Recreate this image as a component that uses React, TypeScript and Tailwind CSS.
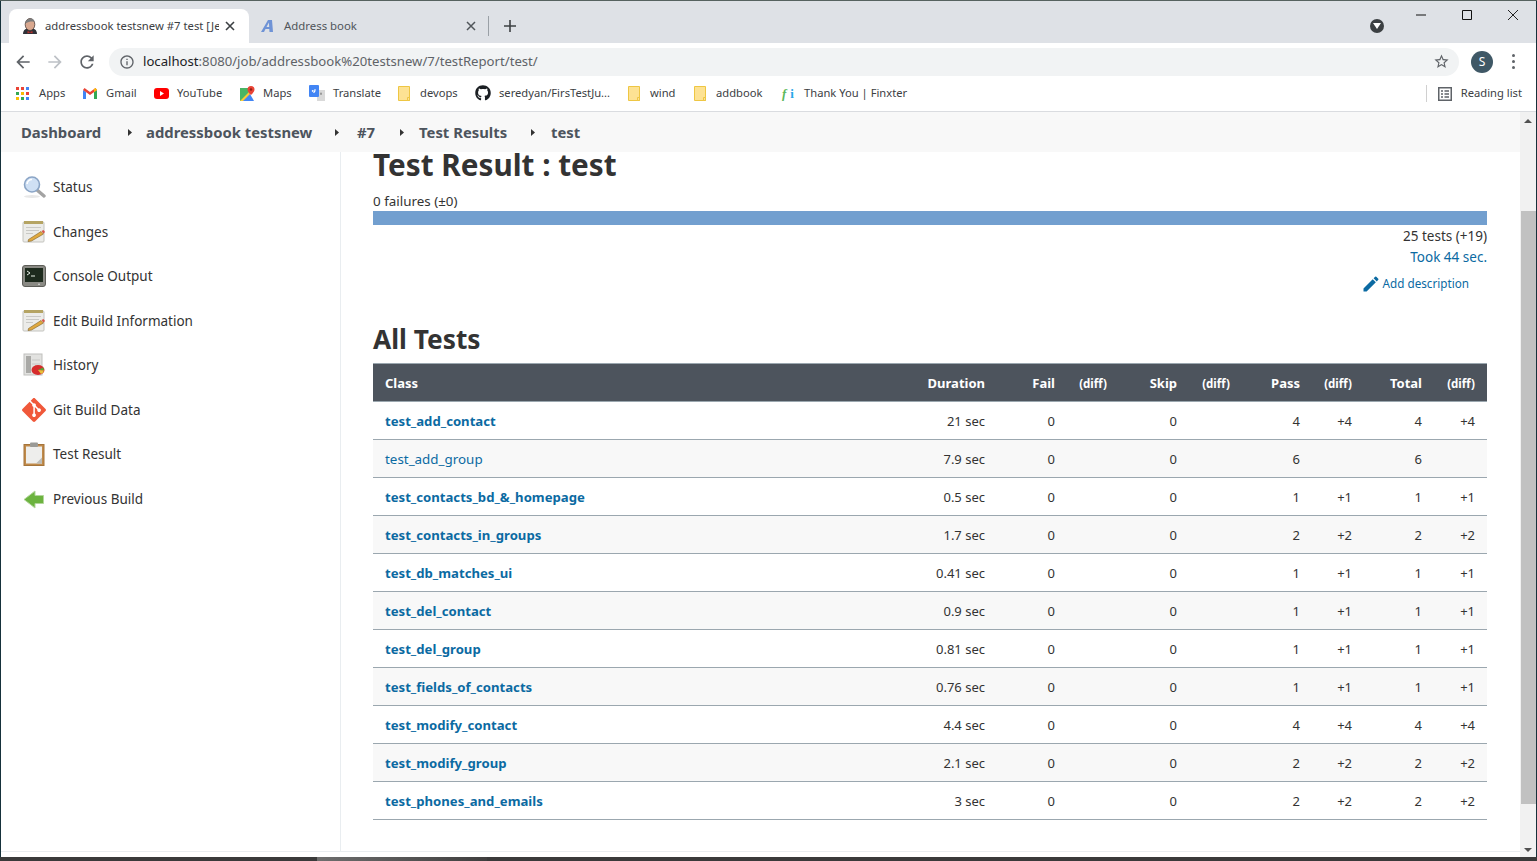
import React from "react";
import { SiGit } from "react-icons/si";
import { FaGithub } from "react-icons/fa";

const rows = [
  ["test_add_contact", "21 sec", "0", "0", "4", "+4", "4", "+4", true],
  ["test_add_group", "7.9 sec", "0", "0", "6", "", "6", "", false],
  ["test_contacts_bd_&_homepage", "0.5 sec", "0", "0", "1", "+1", "1", "+1", true],
  ["test_contacts_in_groups", "1.7 sec", "0", "0", "2", "+2", "2", "+2", true],
  ["test_db_matches_ui", "0.41 sec", "0", "0", "1", "+1", "1", "+1", true],
  ["test_del_contact", "0.9 sec", "0", "0", "1", "+1", "1", "+1", true],
  ["test_del_group", "0.81 sec", "0", "0", "1", "+1", "1", "+1", true],
  ["test_fields_of_contacts", "0.76 sec", "0", "0", "1", "+1", "1", "+1", true],
  ["test_modify_contact", "4.4 sec", "0", "0", "4", "+4", "4", "+4", true],
  ["test_modify_group", "2.1 sec", "0", "0", "2", "+2", "2", "+2", true],
  ["test_phones_and_emails", "3 sec", "0", "0", "2", "+2", "2", "+2", true],
] as const;

const Notepad = () => (
  <svg width="24" height="24" viewBox="0 0 24 24">
    <rect x="1" y="2" width="21" height="20" rx="1" fill="#ecece9" stroke="#c4c4bf" />
    <rect x="2" y="1" width="19" height="3" fill="#b5a463" />
    <path d="M4 7.500h15M4 10.500h13M4 13.500h7" stroke="#c9c9c5" strokeWidth="1" />
    <path d="M6.500 19.500l12.500-8 2.500 2.500-12 7-3.500 .5z" fill="#e0a93f" stroke="#7e5f26" strokeWidth=".6" />
    <path d="M19.500 11l2-1 1.500 2-1.500 1.500z" fill="#d9534a" />
  </svg>
);
const Magnifier = () => (
  <svg width="24" height="24" viewBox="0 0 24 24">
    <ellipse cx="10" cy="21.500" rx="8" ry="1.500" fill="#e8e8e8" />
    <path d="M15 15l7 6" stroke="#a3a3a3" strokeWidth="3.400" strokeLinecap="round" />
    <circle cx="10" cy="9.500" r="7.500" fill="#cfe0f4" stroke="#8ba5c6" strokeWidth="1.600" />
    <path d="M5 9a5 5 0 015-4.500" stroke="#fff" strokeWidth="1.600" fill="none" />
  </svg>
);
const Terminal = () => (
  <svg width="24" height="24" viewBox="0 0 24 24">
    <rect x="0.500" y="1.500" width="23" height="21" rx="2.500" fill="#8a8a84" stroke="#5d5d58" />
    <rect x="3" y="4" width="18" height="14" fill="#1d2a1d" />
    <path d="M5 7l3 2-3 2" stroke="#e8efe6" strokeWidth="1" fill="none" />
    <path d="M9 12h4" stroke="#e8efe6" strokeWidth="1" />
    <circle cx="17" cy="20.300" r=".7" fill="#fff" />
  </svg>
);
const History = () => (
  <svg width="24" height="24" viewBox="0 0 24 24">
    <rect x="2" y="1" width="18" height="21" fill="#e2e2e0" stroke="#c0c0bd" />
    <rect x="4" y="3" width="5" height="17" fill="#a9a9a6" />
    <path d="M10 7h8M10 11h8M10 15h8" stroke="#c8c8c6" />
    <ellipse cx="16" cy="17" rx="6.500" ry="5" fill="#d62c2c" />
    <path d="M16 17l5 -2.500a6 5 0 011 3z" fill="#57a63a" />
    <path d="M16 17l6 .5a6 5 0 01-3 3.600z" fill="#e6c23a" />
  </svg>
);
const Clipboard = () => (
  <svg width="24" height="24" viewBox="0 0 24 24">
    <rect x="2" y="2.500" width="20" height="21" fill="#c08a4a" stroke="#a5743a" />
    <rect x="4" y="4.500" width="16" height="17" fill="#eeeeec" />
    <rect x="8" y="0.500" width="8" height="4.500" rx="1" fill="#9a9a96" />
    <path d="M14 21.500l6-6v6z" fill="#bcbcb8" />
  </svg>
);
const PrevArrow = () => (
  <svg width="24" height="24" viewBox="0 0 24 24">
    <path d="M2 12.500L13 4v4.500h8.500v8H13V21z" fill="#6cb33f" stroke="#b3d69c" strokeWidth="1" />
  </svg>
);

const side: [string, React.ReactNode][] = [
  ["Status", <Magnifier />],
  ["Changes", <Notepad />],
  ["Console Output", <Terminal />],
  ["Edit Build Information", <Notepad />],
  ["History", <History />],
  ["Git Build Data", <SiGit size={24} color="#f0583a" />],
  ["Test Result", <Clipboard />],
  ["Previous Build", <PrevArrow />],
];

const Folder = () => (
  <svg width="12" height="15" viewBox="0 0 12 15">
    <path d="M.5.500h11v14H.5z" fill="#fde293" stroke="#eec643" />
    <path d="M9.500 11.500h2v3h-2z" fill="#fde293" stroke="#eec643" />
  </svg>
);

const Jenkins = () => (
  <svg width="16" height="16" viewBox="0 0 16 16">
    <path d="M1 16c0-3 1.500-5 4-5.500h6c2.500 .5 4 2.500 4 5.500z" fill="#2f3138" />
    <ellipse cx="8" cy="6.500" rx="4.800" ry="6" fill="#d9a88f" stroke="#4a3a35" strokeWidth=".8" />
    <path d="M3.500 5.500C3.500 1.500 7 .5 9 .5c2.500 0 3.500 2 3.500 3.500C10 3 7 3.500 3.500 5.500z" fill="#7c7c7c" />
    <path d="M5.500 13l2.500 1 2.500-1v2.500l-2.500-1-2.500 1z" fill="#b5322e" />
  </svg>
);

const bookmarks: [string, React.ReactNode, string, string][] = [
  ["Apps", (
    <svg width="13" height="13" viewBox="0 0 13 13">
      <rect x="0" y="0" width="3" height="3" fill="#ea4335" /><rect x="5" y="0" width="3" height="3" fill="#ea4335" /><rect x="10" y="0" width="3" height="3" fill="#4285f4" />
      <rect x="0" y="5" width="3" height="3" fill="#34a853" /><rect x="5" y="5" width="3" height="3" fill="#fbbc04" /><rect x="10" y="5" width="3" height="3" fill="#ea4335" />
      <rect x="0" y="10" width="3" height="3" fill="#fbbc04" /><rect x="5" y="10" width="3" height="3" fill="#34a853" /><rect x="10" y="10" width="3" height="3" fill="#4285f4" />
    </svg>
  ), "w-[67px]", "w-[23px]"],
  ["Gmail", (
    <svg width="14" height="11" viewBox="0 0 14 11">
      <path d="M0 2v9h3V4z" fill="#4285f4" /><path d="M14 2v9h-3V4z" fill="#34a853" />
      <path d="M0 2l7 5 7-5-1.500-2L7 4 1.500 0z" fill="#ea4335" />
      <path d="M11 4l3-2 -1.500-2L11 1z" fill="#fbbc04" />
    </svg>
  ), "w-[71px]", "w-[23px]"],
  ["YouTube", (
    <svg width="15" height="11" viewBox="0 0 15 11">
      <rect width="15" height="11" rx="3" fill="#f00" /><path d="M6 3l4 2.500L6 8z" fill="#fff" />
    </svg>
  ), "w-[86px]", "w-[23px]"],
  ["Maps", (
    <svg width="15" height="15" viewBox="0 0 15 15">
      <path d="M0 2h10v13H0z" fill="#48b564" /><path d="M0 15L10 5v10z" fill="#fcc934" /><path d="M3 15l7-7 4 7z" fill="#4285f4" />
      <path d="M11 0a3.500 3.500 0 013.500 3.500C14.500 6 11 9 11 9S7.500 6 7.500 3.500A3.500 3.500 0 0111 0z" fill="#ea4335" /><circle cx="11" cy="3.500" r="1.200" fill="#8f2018" />
    </svg>
  ), "w-[69px]", "w-[23px]"],
  ["Translate", (
    <svg width="16" height="16" viewBox="0 0 16 16">
      <rect x="8" y="5" width="8" height="11" fill="#d9d9d9" /><rect x="0" y="0" width="10" height="12" rx="1" fill="#4285f4" />
      <path d="M7 5H5v1.500h1.200A1.500 1.500 0 113.500 5" stroke="#fff" strokeWidth="1" fill="none" />
      <path d="M12 7l1 2.500h-2z" fill="#707070" />
    </svg>
  ), "w-[89px]", "w-[24px]"],
  ["devops", <Folder />, "w-[77px]", "w-[22px]"],
  ["seredyan/FirsTestJu...", <FaGithub size={16} color="#1b1f23" />, "w-[153px]", "w-[24px]"],
  ["wind", <Folder />, "w-[66px]", "w-[22px]"],
  ["addbook", <Folder />, "w-[88px]", "w-[22px]"],
  ["Thank You | Finxter", (
    <span className="flex gap-[4px] text-[13px] font-bold leading-none font-['Liberation_Serif',serif]">
      <span className="italic text-[#5cb85c]">f</span>
      <span className="text-[#2aa7e8]">i</span>
    </span>
  ), "w-[140px]", "w-[22px]"],
];

const th = "text-right font-bold text-white pr-[12px] pt-[2px]";
const diff = "text-right text-[11.500px] font-bold text-white pr-[12px] pt-[2px]";
const td = "text-right text-[#333] font-normal pr-[12px] pt-[2px]";

export default function App() {
  return (
    <div className="w-[1537px] h-[861px] overflow-hidden flex flex-col bg-[#16313b] font-['Noto_Sans',sans-serif]">
      <div className="h-px shrink-0 bg-[#56625f]" />
      <div className="mx-px flex-1 flex flex-col min-h-0 bg-white">
        {/* tab strip */}
        <div className="h-[42px] bg-[#dee1e6] flex items-end pl-[8px] shrink-0">
          <div className="w-[240px] h-[34px] bg-white rounded-t-[8px] flex items-center pl-[13px] pr-[10px]">
            <Jenkins />
            <span className="ml-[7px] w-[174px] overflow-hidden whitespace-nowrap text-[11.300px] text-[#3c4043]">addressbook testsnew #7 test [Je</span>
            <svg width="10" height="10" viewBox="0 0 10 10" className="ml-[6px]"><path d="M1 1l8 8M9 1l-8 8" stroke="#3c4043" strokeWidth="1.600" /></svg>
          </div>
          <div className="w-[239px] h-[34px] flex items-center pl-[11px] pr-[12px]">
            <svg width="14" height="14" viewBox="0 0 14 14">
              <path d="M1 13L8 1h4l1 12H9.500l-.2-3H5.500l-1.500 3z" fill="#6f93d6" />
              <path d="M6.500 8h2.700l-.3-4.500z" fill="#dee1e6" />
            </svg>
            <span className="ml-[10px] flex-1 text-[11.400px] text-[#50555a] whitespace-nowrap">Address book</span>
            <svg width="10" height="10" viewBox="0 0 10 10"><path d="M1 1l8 8M9 1l-8 8" stroke="#50555a" strokeWidth="1.500" /></svg>
          </div>
          <div className="w-px h-[20px] bg-[#9aa0a6] mb-[7px]" />
          <svg width="12" height="12" viewBox="0 0 12 12" className="ml-[15px] mb-[11px]"><path d="M6 0v12M0 6h12" stroke="#3c4043" strokeWidth="1.600" /></svg>
          <div className="flex-1" />
          <div className="w-[14px] h-[14px] rounded-full bg-[#3c4043] flex items-center justify-center mb-[10px] mr-[31px]">
            <svg width="8" height="6" viewBox="0 0 8 6"><path d="M0 0h8L4 6z" fill="#fff" /></svg>
          </div>
          <div className="self-start flex items-center h-[28px] pr-[17px] gap-[34px]">
            <svg width="12" height="12" viewBox="0 0 12 12"><path d="M1 6h10" stroke="#111" /></svg>
            <svg width="12" height="12" viewBox="0 0 12 12"><path d="M1.500 1.500h9v9h-9z" stroke="#111" fill="none" /></svg>
            <svg width="12" height="12" viewBox="0 0 12 12"><path d="M1 1l10 10M11 1L1 11" stroke="#222" /></svg>
          </div>
        </div>
        {/* toolbar */}
        <div className="h-[37px] shrink-0 flex items-center pl-[12px] pr-[15px]">
          <svg width="20" height="20" viewBox="0 0 24 24" fill="#5f6368"><path d="M20 11H7.830l5.590-5.590L12 4l-8 8 8 8 1.410-1.410L7.830 13H20v-2z" /></svg>
          <svg width="20" height="20" viewBox="0 0 24 24" fill="#bdc1c6" className="ml-[12px]"><path d="M4 11h12.170l-5.590-5.590L12 4l8 8-8 8-1.410-1.410L16.170 13H4v-2z" /></svg>
          <svg width="20" height="20" viewBox="0 0 24 24" fill="#5f6368" className="ml-[12px]"><path d="M17.650 6.350C16.200 4.900 14.210 4 12 4c-4.420 0-7.990 3.580-7.990 8s3.570 8 7.990 8c3.730 0 6.840-2.550 7.730-6h-2.080c-.82 2.330-3.040 4-5.650 4-3.310 0-6-2.690-6-6s2.690-6 6-6c1.660 0 3.140.69 4.220 1.780L13 11h7V4l-2.350 2.350z" /></svg>
          <div className="ml-[12px] w-[1350px] h-[28px] rounded-full bg-[#f1f3f4] flex items-center pl-[10px] pr-[9px]">
            <svg width="16" height="16" viewBox="0 0 24 24" fill="#5f6368"><path d="M11 7h2v2h-2zm0 4h2v6h-2zm1-9C6.480 2 2 6.480 2 12s4.480 10 10 10 10-4.480 10-10S17.520 2 12 2zm0 18c-4.410 0-8-3.590-8-8s3.590-8 8-8 8 3.590 8 8-3.590 8-8 8z" /></svg>
            <span className="ml-[8px] flex-1 text-[13.170px] text-[#5f6368] whitespace-nowrap"><span className="text-[#202124]">localhost</span>:8080/job/addressbook%20testsnew/7/testReport/test/</span>
            <svg width="17" height="17" viewBox="0 0 24 24" fill="#5f6368"><path d="M22 9.240l-7.190-.62L12 2 9.190 8.630 2 9.240l5.460 4.730L5.820 21 12 17.270 18.180 21l-1.630-7.030L22 9.240zM12 15.400l-3.760 2.270 1-4.280-3.320-2.880 4.380-.38L12 6.100l1.710 4.040 4.380.38-3.320 2.880 1 4.280L12 15.400z" /></svg>
          </div>
          <div className="ml-[12px] w-[22px] h-[22px] rounded-full bg-[#3f5866] text-white text-[12px] flex items-center justify-center">S</div>
          <div className="ml-[19px] flex flex-col gap-[3px]">
            <span className="w-[3px] h-[3px] rounded-full bg-[#5f6368]" />
            <span className="w-[3px] h-[3px] rounded-full bg-[#5f6368]" />
            <span className="w-[3px] h-[3px] rounded-full bg-[#5f6368]" />
          </div>
        </div>
        {/* bookmarks */}
        <div className="h-[32px] shrink-0 border-b border-[#dadce0] flex items-center pl-[15px] pb-[4px] text-[11.200px] text-[#3c4043]">
          {bookmarks.map(([t, ic, w, iw]) => (
            <div key={t} className={`${w} flex items-center whitespace-nowrap`}>
              <span className={`${iw} flex items-center`}>{ic}</span>
              <span>{t}</span>
            </div>
          ))}
          <div className="flex-1" />
          <div className="w-px h-[17px] bg-[#d0d0d0]" />
          <svg width="14" height="14" viewBox="0 0 14 14" className="ml-[11px]">
            <rect x=".75" y=".75" width="12.500" height="12.500" fill="none" stroke="#5f6368" strokeWidth="1.500" />
            <path d="M3 4h2M3 7h2M3 10h2M6.500 4H11M6.500 7H11M6.500 10H11" stroke="#5f6368" strokeWidth="1.300" />
          </svg>
          <span className="ml-[9px] mr-[14px] whitespace-nowrap">Reading list</span>
        </div>
        {/* page + scrollbar */}
        <div className="flex-1 flex min-h-0">
          <div className="flex-1 min-w-0 flex flex-col">
            <div className="h-[40px] shrink-0 bg-[#f8f8f8] flex items-center pl-[20px] text-[14.850px] font-bold text-[#4d545d] whitespace-nowrap">
              <span className="w-[107px]">Dashboard</span>
              <Caret cls="w-[18px]" />
              <span className="w-[189px]">addressbook testsnew</span>
              <Caret cls="w-[22px]" />
              <span className="w-[43px]">#7</span>
              <Caret cls="w-[19px]" />
              <span className="w-[112px]">Test Results</span>
              <Caret cls="w-[20px]" />
              <span>test</span>
            </div>
            <div className="h-[700px] shrink-0 flex border-b border-[#e9edf0]">
              <aside className="w-[340px] shrink-0 border-r border-[#e9edf0] pt-[13px] pl-[21px]">
                {side.map(([t, ic]) => (
                  <div key={t} className="h-[44.500px] flex items-center text-[13.500px] text-[#333]">
                    <span className="w-[31px] flex items-center">{ic}</span>
                    <span>{t}</span>
                  </div>
                ))}
              </aside>
              <main className="flex-1 min-w-0 pl-[32px] pr-[33px] overflow-hidden">
                <h1 className="h-[40px] text-[29.700px] leading-[25px] font-bold text-[#333] whitespace-nowrap">Test Result : test</h1>
                <div className="h-[19px] text-[13.400px] leading-[19px] text-[#333]">0 failures (±0)</div>
                <div className="h-[14px] bg-[#729fcf]" />
                <div className="text-right text-[13.500px] leading-[21px] h-[21px] mt-px text-[#333]">25 tests (+19)</div>
                <div className="text-right text-[13.500px] leading-[21px] h-[21px] text-[#0b6aa2]">Took 44 sec.</div>
                <div className="h-[32px] flex items-center justify-end pr-[18px] text-[11.700px] text-[#0b6aa2]">
                  <svg width="20" height="20" viewBox="0 0 24 24" fill="#0b6aa2" className="mr-[2px]"><path d="M3 17.250V21h3.750L17.810 9.940l-3.750-3.750L3 17.250zM20.710 7.040a1 1 0 000-1.410l-2.340-2.340a1 1 0 00-1.410 0l-1.830 1.830 3.750 3.750 1.830-1.830z" /></svg>
                  Add description
                </div>
                <h2 className="mt-[24px] h-[39px] text-[26.300px] leading-[31px] font-bold text-[#333] whitespace-nowrap">All Tests</h2>
                <table className="w-[1114px] table-fixed border-collapse text-[13px]">
                  <colgroup>
                    <col className="w-[554px]" /><col className="w-[70px]" /><col className="w-[70px]" /><col className="w-[52px]" /><col className="w-[70px]" /><col className="w-[53px]" /><col className="w-[70px]" /><col className="w-[52px]" /><col className="w-[70px]" /><col className="w-[53px]" />
                  </colgroup>
                  <thead>
                    <tr className="h-[38px] bg-[#4d545d] border-t border-b border-[#9ba7af]">
                      <th className="pl-[12px] pt-[2px] text-left font-bold text-white">Class</th>
                      <th className={th}>Duration</th>
                      <th className={th}>Fail</th>
                      <th className={diff}>(diff)</th>
                      <th className={th}>Skip</th>
                      <th className={diff}>(diff)</th>
                      <th className={th}>Pass</th>
                      <th className={diff}>(diff)</th>
                      <th className={th}>Total</th>
                      <th className={diff}>(diff)</th>
                    </tr>
                  </thead>
                  <tbody>
                    {rows.map((r, i) => (
                      <tr key={r[0]} className={`h-[38px] border-b border-[#9ba7af] ${i % 2 ? "bg-[#f8f8f8]" : "bg-white"}`}>
                        <td className={`pl-[12px] pt-[2px] text-[#0b6aa2] whitespace-nowrap ${r[8] ? "font-bold text-[13.150px]" : "font-normal text-[13.400px]"}`}>{r[0]}</td>
                        <td className={td}>{r[1]}</td>
                        <td className={td}>{r[2]}</td>
                        <td />
                        <td className={td}>{r[3]}</td>
                        <td />
                        <td className={td}>{r[4]}</td>
                        <td className={td}>{r[5]}</td>
                        <td className={td}>{r[6]}</td>
                        <td className={td}>{r[7]}</td>
                      </tr>
                    ))}
                  </tbody>
                </table>
              </main>
            </div>
            <div className="flex-1" />
          </div>
          {/* scrollbar */}
          <div className="w-[16px] shrink-0 bg-[#f1f1f1] flex flex-col items-center">
            <div className="h-[99px] w-full flex justify-center pt-[7px]">
              <svg width="8" height="4" viewBox="0 0 8 4"><path d="M0 4l4-4 4 4z" fill="#505050" /></svg>
            </div>
            <div className="w-[15px] h-[593px] bg-[#c1c1c1]" />
            <div className="flex-1 flex items-end pb-[5px]">
              <svg width="8" height="4" viewBox="0 0 8 4"><path d="M0 0l4 4 4-4z" fill="#505050" /></svg>
            </div>
          </div>
        </div>
      </div>
      {/* task bar sliver */}
      <div className="h-[4px] shrink-0 flex">
        <div className="w-[317px] bg-[#3a3a3a]" />
        <div className="w-[170px] bg-gradient-to-r from-[#6e6e6e] to-[#3f3f3f]" />
        <div className="flex-1 bg-[#3a3a3a]" />
      </div>
    </div>
  );
}

function Caret({ cls }: { cls: string }) {
  return (
    <span className={`${cls} flex items-center`}>
      <svg width="4" height="7" viewBox="0 0 4 7"><path d="M0 0l4 3.500L0 7z" fill="#333" /></svg>
    </span>
  );
}
